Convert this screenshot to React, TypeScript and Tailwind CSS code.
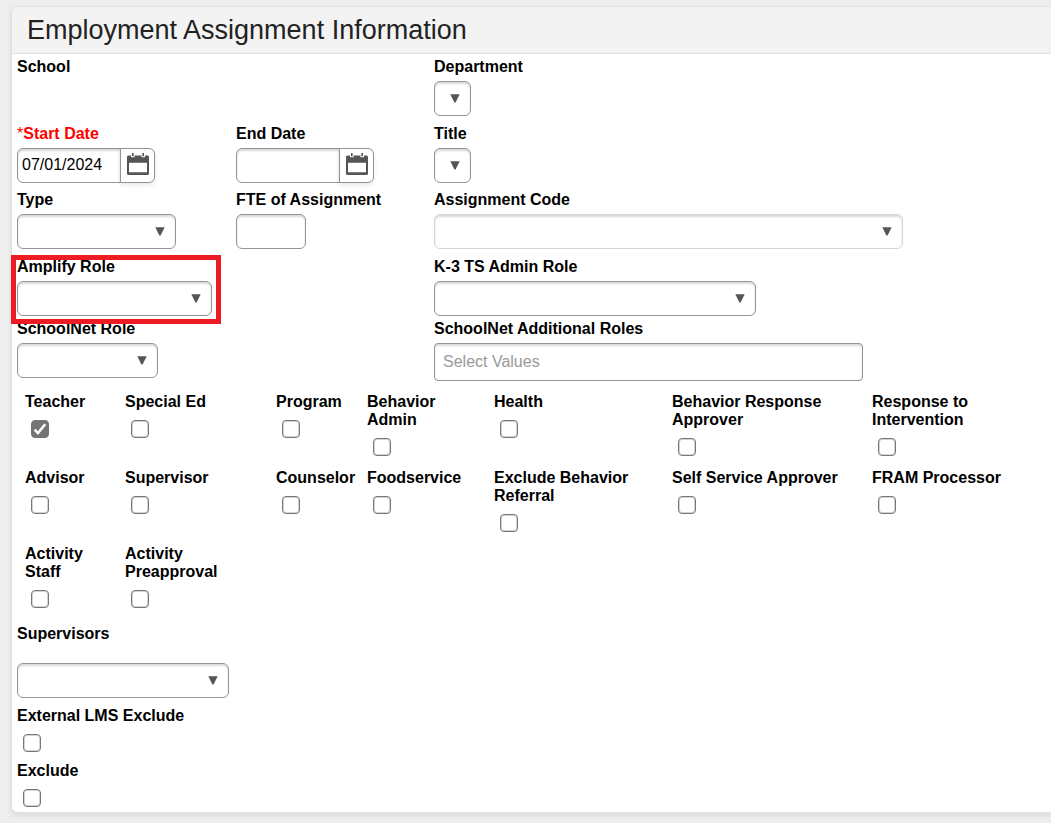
import { useState, type ReactNode } from 'react';
import clsx from 'clsx';

interface Flag {
  id: string;
  label: string;
}

const FLAGS: Flag[] = [
  { id: 'teacher', label: 'Teacher' },
  { id: 'specialEd', label: 'Special Ed' },
  { id: 'program', label: 'Program' },
  { id: 'behaviorAdmin', label: 'Behavior Admin' },
  { id: 'health', label: 'Health' },
  { id: 'behaviorApprover', label: 'Behavior Response Approver' },
  { id: 'rti', label: 'Response to Intervention' },
  { id: 'advisor', label: 'Advisor' },
  { id: 'supervisor', label: 'Supervisor' },
  { id: 'counselor', label: 'Counselor' },
  { id: 'foodservice', label: 'Foodservice' },
  { id: 'excludeReferral', label: 'Exclude Behavior Referral' },
  { id: 'selfService', label: 'Self Service Approver' },
  { id: 'fram', label: 'FRAM Processor' },
  { id: 'activityStaff', label: 'Activity Staff' },
  { id: 'activityPreapproval', label: 'Activity Preapproval' },
];

const box = 'h-[35px] rounded-md border bg-white inset-shadow-[0_2px_2px_#00000026] outline-none';

function CalendarIcon() {
  return (
    <svg width="22" height="22" viewBox="0 0 22 22" aria-hidden="true">
      <path
        fillRule="evenodd"
        fill="#555"
        d="M1.5 2.5h19A1.5 1.5 0 0 1 22 4v16.5a1.5 1.5 0 0 1-1.5 1.5h-19A1.5 1.5 0 0 1 0 20.5V4a1.5 1.5 0 0 1 1.5-1.5zM2 9.7v9.5h18V9.7z"
      />
      <path fill="#fff" d="M4 0h3.6v4.2H4zM14.4 0H18v4.2h-3.6z" />
      <path fill="#555" d="M5 0h1.6v3.2H5zM15.4 0H17v3.2h-1.6z" />
    </svg>
  );
}

function Field({ id, label, required, className, children }: {
  id?: string;
  label: string;
  required?: boolean;
  className?: string;
  children?: ReactNode;
}) {
  return (
    <div className={clsx('flex flex-col items-start gap-[5px] pt-px', className)}>
      <label htmlFor={id} className={clsx('font-bold', required && 'text-[#f00]')}>
        {required && <span className="font-normal">*</span>}
        {label}
      </label>
      {children}
    </div>
  );
}

function Select({ id, className, light }: { id: string; className: string; light?: boolean }) {
  return (
    <div className={clsx('relative max-w-full', className)}>
      <select id={id} className={clsx(box, 'w-full appearance-none', light ? 'border-[#d4d4d4]' : 'border-[#949494]')}>
        <option value=""></option>
      </select>
      <svg className="pointer-events-none absolute top-[13px] right-[11px]" width="10" height="9" viewBox="0 0 10 9">
        <path d="M.3.3h9.4L5.6 8.5H4.4z" fill="#555" />
      </svg>
    </div>
  );
}

function DateInput({ id, value }: { id: string; value?: string }) {
  return (
    <div className="flex">
      <input
        id={id}
        type="text"
        defaultValue={value}
        className={clsx(box, 'w-[104px] rounded-r-none border-[#949494] px-1 pb-0.5')}
      />
      <button
        type="button"
        aria-label="Open calendar"
        className="-ml-px flex h-[35px] w-[35px] items-center justify-center rounded-r-md border border-[#949494] bg-white pb-1 shadow-[0_2px_4px_#0000001a]"
      >
        <CalendarIcon />
      </button>
    </div>
  );
}

function CheckField({ id, label, checked, onChange }: {
  id: string;
  label: string;
  checked: boolean;
  onChange: () => void;
}) {
  return (
    <div className="flex flex-col items-start gap-[9px] pt-px">
      <label htmlFor={id} className="font-bold">{label}</label>
      <div className="relative ml-1.5 size-[18px]">
        <input
          id={id}
          type="checkbox"
          checked={checked}
          onChange={onChange}
          className="block size-[18px] appearance-none rounded-[4px] border border-[#767676] bg-white inset-shadow-[0_0_0_1px_#76767650] checked:bg-[#757575]"
        />
        {checked && (
          <svg className="pointer-events-none absolute inset-0" width="18" height="18" viewBox="0 0 18 18">
            <path d="M3.6 9.6l3.3 3.5 7.3-8.8" fill="none" stroke="#fff" strokeWidth="2.5" />
          </svg>
        )}
      </div>
    </div>
  );
}

export default function App() {
  const [checked, setChecked] = useState<Record<string, boolean>>({ teacher: true });
  const toggle = (id: string) => setChecked((prev) => ({ ...prev, [id]: !prev[id] }));

  return (
    <div className="min-h-screen bg-[#eee] pt-1.5 pb-2.5 pl-[11px] font-['Liberation_Sans',Arial,sans-serif] text-base leading-[18px] text-black">
      <section className="rounded-l-md border border-r-0 border-[#dfdfdf] bg-white shadow-[0_3px_5px_#00000014]">
        <header className="rounded-tl-md border-b border-[#dfdfdf] bg-[#f3f3f3] px-[15px]">
          <h1 className="text-[27px] leading-[46px] text-[#222]">Employment Assignment Information</h1>
        </header>

        <form className="px-[5px] pt-[3px] pb-[5px]">
          <div className="grid grid-cols-[219px_198px_1fr] grid-rows-[67px_66px_67px_62px_auto]">
            <Field label="School" className="col-span-2" />
            <Field id="department" label="Department">
              <Select id="department" className="w-[37px]" />
            </Field>

            <Field id="startDate" label="Start Date" required>
              <DateInput id="startDate" value="07/01/2024" />
            </Field>
            <Field id="endDate" label="End Date">
              <DateInput id="endDate" />
            </Field>
            <Field id="title" label="Title">
              <Select id="title" className="w-[37px]" />
            </Field>

            <Field id="type" label="Type">
              <Select id="type" className="w-[159px]" />
            </Field>
            <Field id="fte" label="FTE of Assignment">
              <input id="fte" type="text" className={clsx(box, 'w-[70px] border-[#949494] px-1')} />
            </Field>
            <Field id="assignmentCode" label="Assignment Code">
              <Select id="assignmentCode" className="w-[469px]" light />
            </Field>

            <Field id="amplifyRole" label="Amplify Role" className="relative z-10 col-span-2">
              <Select id="amplifyRole" className="w-[195px]" />
              {/* highlight frame around the role */}
              <div className="pointer-events-none absolute -top-0.5 -left-1.5 h-[69px] w-[210px] border-5 border-[#ed1c24]" />
            </Field>
            <Field id="k3Role" label="K-3 TS Admin Role">
              <Select id="k3Role" className="w-[322px]" />
            </Field>

            <Field id="schoolNetRole" label="SchoolNet Role" className="col-span-2">
              <Select id="schoolNetRole" className="w-[141px]" />
            </Field>
            <Field id="additionalRoles" label="SchoolNet Additional Roles">
              <input
                id="additionalRoles"
                type="text"
                placeholder="Select Values"
                className="h-[38px] w-[429px] max-w-full rounded-sm border border-[#949494] px-2 inset-shadow-[0_2px_2px_#00000026] outline-none placeholder:text-[#999]"
              />
            </Field>
          </div>

          <div className="mt-[11px] grid auto-rows-[76px] grid-cols-[100px_151px_91px_127px_178px_200px_1fr] pl-2">
            {FLAGS.map((f) => (
              <div key={f.id} className={clsx(f.id === 'rti' && 'w-[110px]', f.id !== 'rti' && f.id !== 'counselor' && 'pr-2.5')}>
                <CheckField id={f.id} label={f.label} checked={!!checked[f.id]} onChange={() => toggle(f.id)} />
              </div>
            ))}
          </div>

          <div className="mt-1 flex flex-col items-start gap-5 pt-px">
            <label htmlFor="supervisors" className="font-bold">Supervisors</label>
            <Select id="supervisors" className="w-[212px]" />
          </div>
          <div className="mt-2 flex flex-col gap-[9px]">
            <CheckField id="lmsExclude" label="External LMS Exclude" checked={!!checked.lmsExclude} onChange={() => toggle('lmsExclude')} />
            <CheckField id="exclude" label="Exclude" checked={!!checked.exclude} onChange={() => toggle('exclude')} />
          </div>
        </form>
      </section>
    </div>
  );
}
